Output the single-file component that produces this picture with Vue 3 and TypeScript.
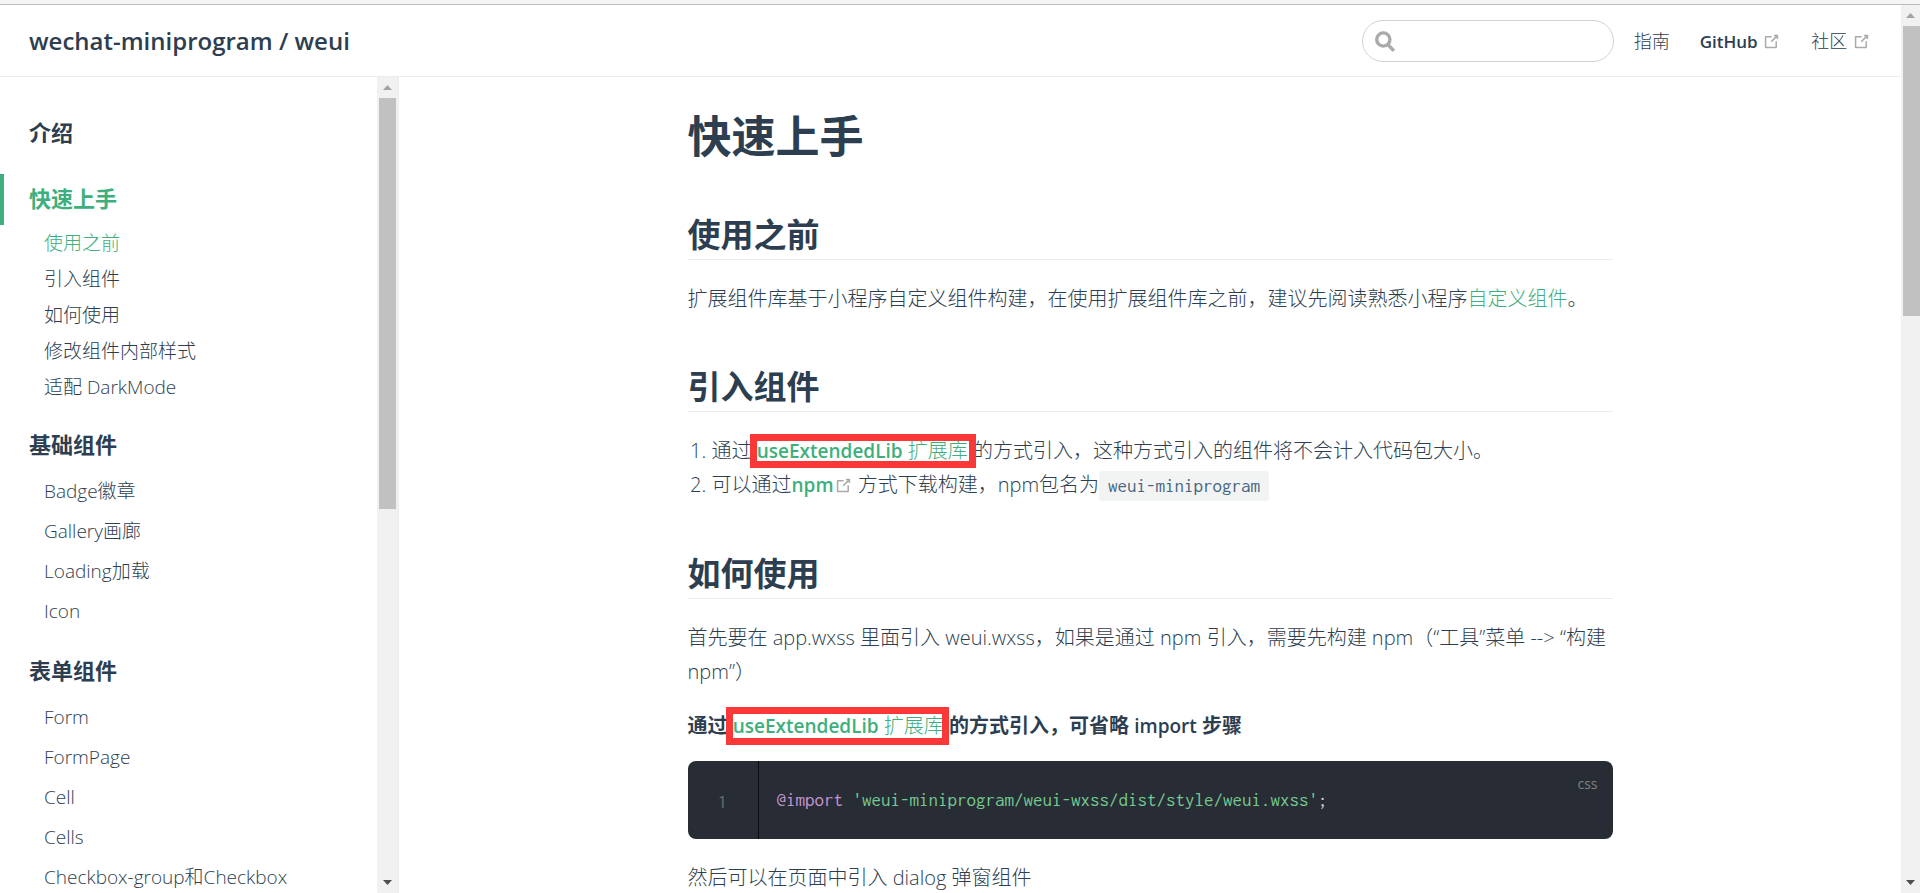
<script setup lang="ts">
import { h, ref } from 'vue'

interface Group {
  title: string
  active?: boolean
  compact?: boolean
  items: string[]
}

const groups: Group[] = [
  { title: '介绍', items: [] },
  {
    title: '快速上手',
    active: true,
    compact: true,
    items: ['使用之前', '引入组件', '如何使用', '修改组件内部样式', '适配 DarkMode'],
  },
  { title: '基础组件', items: ['Badge徽章', 'Gallery画廊', 'Loading加载', 'Icon'] },
  {
    title: '表单组件',
    items: ['Form', 'FormPage', 'Cell', 'Cells', 'Checkbox-group和Checkbox'],
  },
]

const current = '使用之前'
const query = ref('')

const OutboundIcon = () =>
  h('svg', { class: 'outbound', viewBox: '0 0 100 100', 'aria-hidden': 'true' }, [
    h('path', {
      d: 'M18.8,85.1h56l0,0c2.2,0,4-1.8,4-4v-32h-8v28h-48v-48h28v-8h-32l0,0c-2.2,0-4,1.8-4,4v56C14.8,83.3,16.6,85.1,18.8,85.1z',
    }),
    h('polygon', {
      points:
        '45.7,48.7 51.3,54.3 77.2,28.5 77.2,37.2 85.2,37.2 85.2,14.9 62.8,14.9 62.8,22.9 71.5,22.9',
    }),
  ])
</script>

<template>
  <div class="window">
    <div class="strip"></div>
    <div class="viewport">
      <div class="page">
        <header class="navbar">
          <a class="site" href="#">wechat-miniprogram / weui</a>
          <div class="tools">
            <label class="search">
              <svg viewBox="0 0 20 21" aria-hidden="true">
                <circle cx="8.3" cy="8.5" r="6.6" />
                <path d="M12.6 13.4 18.8 19.8" />
              </svg>
              <input v-model="query" type="text" aria-label="Search" />
            </label>
            <nav class="links">
              <a href="#">指南</a>
              <a href="#"><span class="strong">GitHub</span> <OutboundIcon /></a>
              <a href="#">社区 <OutboundIcon /></a>
            </nav>
          </div>
        </header>
        <div class="body">
          <aside class="sidebar">
            <nav class="tree">
              <section v-for="g in groups" :key="g.title" class="group">
                <a href="#" class="heading" :class="{ active: g.active }">{{ g.title }}</a>
                <ul v-if="g.items.length" :class="{ compact: g.compact }">
                  <li v-for="item in g.items" :key="item">
                    <a href="#" :class="{ current: item === current }">{{ item }}</a>
                  </li>
                </ul>
              </section>
            </nav>
            <div class="scrollbar side-bar" aria-hidden="true">
              <i class="arrow up"></i>
              <div class="track"><div class="thumb"></div></div>
              <i class="arrow down"></i>
            </div>
          </aside>
          <main class="main">
            <article class="content">
              <h1>快速上手</h1>

              <h2>使用之前</h2>
              <p>
                扩展组件库基于小程序自定义组件构建，在使用扩展组件库之前，建议先阅读熟悉小程序<a
                  href="#"
                  >自定义组件</a
                >。
              </p>

              <h2>引入组件</h2>
              <ol>
                <li>
                  通过 <span class="mark"><a href="#"><span class="strong">useExtendedLib</span> 扩展库</a></span>
                  的方式引入，这种方式引入的组件将不会计入代码包大小。
                </li>
                <li>
                  可以通过<a href="#"><span class="strong">npm</span><OutboundIcon /></a>
                  方式下载构建，npm包名为<code>weui-miniprogram</code>
                </li>
              </ol>

              <h2>如何使用</h2>
              <p>
                首先要在 app.wxss 里面引入 weui.wxss，如果是通过 npm 引入，需要先构建
                npm（“工具”菜单 --&gt; “构建 npm”）
              </p>
              <p class="lead">
                通过 <span class="mark tall"><a href="#"><span class="strong">useExtendedLib</span> 扩展库</a></span>
                的方式引入，可省略 <span class="strong">import</span> 步骤
              </p>
              <div class="code">
                <span class="lines">1</span>
                <pre><span class="rule">@import</span> <span class="string">'weui-miniprogram/weui-wxss/dist/style/weui.wxss'</span>;</pre>
                <span class="lang">css</span>
              </div>
              <p>然后可以在页面中引入 dialog 弹窗组件</p>
            </article>
          </main>
        </div>
      </div>
      <div class="scrollbar page-bar" aria-hidden="true">
        <i class="arrow up"></i>
        <div class="track"><div class="thumb"></div></div>
        <i class="arrow down"></i>
      </div>
    </div>
  </div>
</template>

<style>
body {
  margin: 0;
  background: #fff;
}

.outbound {
  width: 19px;
  height: 19px;
  fill: #aaa;
  vertical-align: -3px;
}
</style>

<style scoped>
.window {
  display: flex;
  flex-direction: column;
  height: 100vh;
  overflow: hidden;
  color: #2c3e50;
  font-family: 'Open Sans', 'Noto Sans CJK SC', sans-serif;
  font-size: 20px;
  font-weight: 300;
  line-height: 34px;
  text-spacing-trim: space-all;
}

a {
  color: inherit;
  text-decoration: none;
}

.strong {
  font-size: 19px;
  font-weight: 600;
}

.strip {
  flex: none;
  height: 4px;
  background: #f5f5f5;
  border-bottom: 1px solid #bcbcbc;
}

.viewport {
  flex: 1;
  display: flex;
  min-height: 0;
}

.page {
  flex: 1;
  display: flex;
  flex-direction: column;
  min-width: 0;
}

.navbar {
  flex: none;
  display: flex;
  align-items: center;
  justify-content: space-between;
  box-sizing: border-box;
  height: 72px;
  padding: 1px 30px 0 29px;
  border-bottom: 1px solid #eaecef;
}

.site {
  font-size: 24px;
  font-weight: 600;
}

.tools,
.links {
  display: flex;
  align-items: center;
}

.tools {
  gap: 20px;
}

.links {
  gap: 30px;
  font-size: 18px;
}

.links .strong {
  font-size: 17px;
}

.search {
  display: flex;
  align-items: center;
  gap: 8px;
  box-sizing: border-box;
  width: 252px;
  height: 42px;
  padding: 0 12px;
  border: 1px solid #cfd4db;
  border-radius: 21px;
}

.search svg {
  flex: none;
  width: 20px;
  height: 21px;
  fill: none;
  stroke: #aaa;
  stroke-width: 3.4;
}

.search input {
  flex: 1;
  min-width: 0;
  border: 0;
  outline: 0;
  background: none;
  color: inherit;
  font: inherit;
}

.body {
  flex: 1;
  display: flex;
  min-height: 0;
}

.sidebar {
  flex: none;
  display: flex;
  box-sizing: border-box;
  width: 399px;
  border-right: 1px solid #eaecef;
}

.tree {
  flex: 1;
  display: flex;
  flex-direction: column;
  gap: 15px;
  padding-top: 31px;
  overflow: hidden;
}

.group {
  flex: none;
}

.heading {
  display: block;
  padding: 0 30px 2px 25px;
  border-left: 4px solid transparent;
  font-size: 22px;
  font-weight: 700;
  line-height: 49px;
}

.heading.active {
  border-color: #3eaf7c;
  color: #3eaf7c;
}

.tree ul {
  margin: 0;
  padding: 0 20px 0 44px;
  list-style: none;
  font-size: 19px;
  line-height: 40px;
}

.tree ul.compact {
  line-height: 36px;
}

.tree .current {
  color: #3eaf7c;
}

.scrollbar {
  flex: none;
  display: flex;
  flex-direction: column;
  background: #f1f1f1;
}

.side-bar {
  width: 21px;
}

.page-bar {
  width: 19px;
}

.arrow {
  align-self: center;
  width: 9px;
  height: 5px;
  margin: 8px 0;
}

.up {
  background: #a3a3a3;
  clip-path: polygon(50% 0, 100% 100%, 0 100%);
}

.down {
  background: #505050;
  clip-path: polygon(0 0, 100% 0, 50% 100%);
}

.track {
  flex: 1;
  padding: 0 2px;
}

.page-bar .track {
  padding-right: 0;
}

.thumb {
  height: 53.1%;
  background: #c1c1c1;
}

.page-bar .thumb {
  height: 34.3%;
}

.main {
  flex: 1;
  min-width: 0;
  padding-top: 32px;
  overflow: hidden;
}

.content {
  max-width: 925px;
  margin: 0 auto;
}

h1,
h2,
p,
ol {
  margin: 0;
}

h1 {
  font-size: 44px;
  line-height: 55px;
}

h2 {
  margin: 50px 0 22px;
  padding-bottom: 4px;
  border-bottom: 1px solid #eaecef;
  font-size: 33px;
  line-height: 41px;
}

p + p {
  margin-top: 20px;
}

.code {
  margin: 18px 0 22px;
}

.content a {
  color: #3eaf7c;
}

ol {
  padding-left: 24px;
}

.lead {
  font-weight: 700;
}

.lead a {
  font-weight: 300;
}

.mark {
  position: relative;
  display: inline-block;
}

.mark::after {
  content: '';
  position: absolute;
  inset: 0 -8px 0 -7px;
  border: 7px solid #fb3838;
  pointer-events: none;
}

.mark.tall::after {
  inset: -2px -5px -2px -7px;
}

code,
pre,
.lines {
  font-family: Inconsolata, 'DejaVu Sans Mono', monospace;
  font-size: 19px;
  font-weight: 400;
}

code {
  padding: 5px 9px;
  border-radius: 4px;
  background: #f2f4f4;
  color: #476582;
}

.code {
  position: relative;
  display: flex;
  height: 78px;
  border-radius: 8px;
  background: #282c34;
  color: #fff;
}

.lines {
  box-sizing: border-box;
  width: 71px;
  border-right: 1px solid #0c0d10;
  color: #686b71;
  line-height: 82px;
  text-align: center;
}

pre {
  margin: 0;
  padding-left: 18px;
  color: #ccc;
  line-height: 78px;
}

.rule {
  color: #c594d0;
}

.string {
  color: #73c990;
}

.lang {
  position: absolute;
  top: 13px;
  right: 15px;
  color: #7e8185;
  font-size: 14px;
  font-weight: 400;
  line-height: 20px;
}
</style>
